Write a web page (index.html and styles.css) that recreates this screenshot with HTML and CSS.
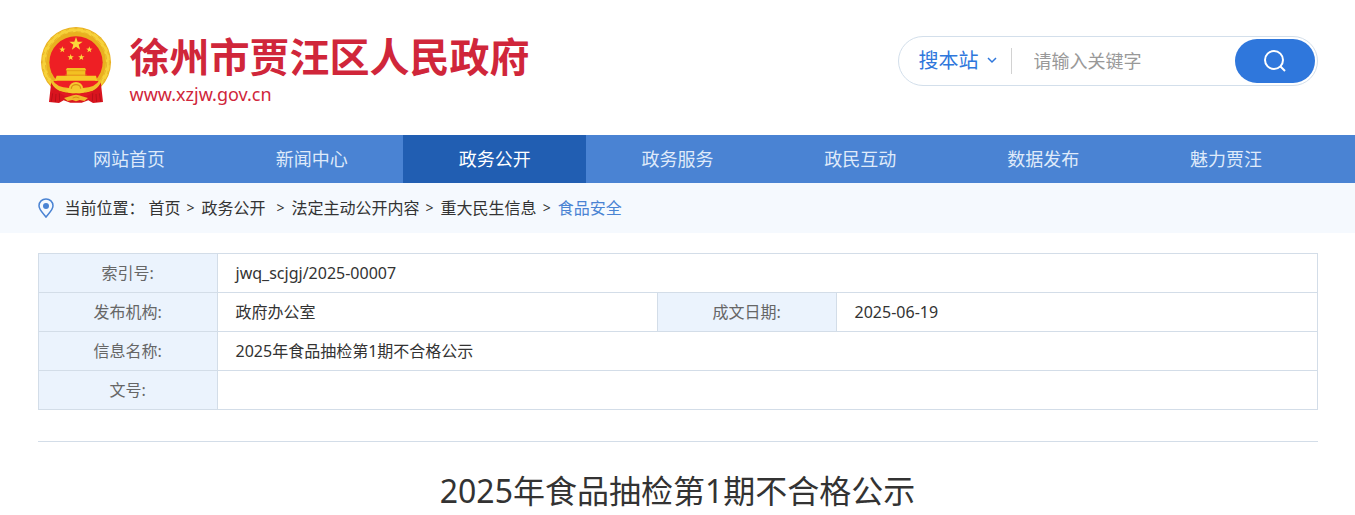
FILE: index.html
```html
<!DOCTYPE html>
<html lang="zh-CN">
<head>
  <meta charset="UTF-8">
  <meta name="viewport" content="width=device-width, initial-scale=1.0">
  <title>2025年食品抽检第1期不合格公示</title>
  <link rel="stylesheet" href="styles.css">
</head>
<body>
  <header class="header container">
    <a class="logo" href="#">
      <svg class="emblem" viewBox="24 15 228 240" aria-hidden="true">
        <defs>
          <path id="star" d="M0-10 2.4-3.2 9.5-3.1 3.8 1.2 5.9 8.1 0 4-5.9 8.1-3.8 1.2-9.5-3.1-2.4-3.2Z"/>
        </defs>
        <!-- wheat ring -->
        <ellipse cx="138" cy="127" rx="105" ry="106" fill="#e9b01f"/>
        <ellipse cx="138" cy="127" rx="96" ry="97" fill="none" stroke="#f7d23a" stroke-width="12"/>
        <ellipse cx="138" cy="127" rx="92" ry="92" fill="none" stroke="#dfa822" stroke-width="2" stroke-dasharray="16 8"/>
        <ellipse cx="138" cy="127" rx="100" ry="101" fill="none" stroke="#dfa822" stroke-width="2" stroke-dasharray="9 17"/>
        <ellipse cx="138" cy="127" rx="80" ry="78" fill="#ee1f24"/>
        <!-- stars -->
        <g fill="#fbd83a">
          <use href="#star" transform="translate(138 72) scale(2.1)"/>
          <use href="#star" transform="translate(97 89)"/>
          <use href="#star" transform="translate(178 89)"/>
          <use href="#star" transform="translate(122 112)"/>
          <use href="#star" transform="translate(154 112)"/>
        </g>
        <!-- gate tower -->
        <path d="M111 144h54l4 7h-3v16h-56v-16h-3z" fill="#f3c022"/>
        <path d="M80 167h118l4 15H74z" fill="#f6c927"/>
        <path d="M109 152h58M105 165h66" stroke="#dc9313" stroke-width="2"/>
        <!-- ribbons -->
        <path d="M64 184h148l7 62-30 3-14-8-20 7h-34l-20-7-14 8-30-3z" fill="#d9141e"/>
        <path d="M68 183h140v12l-30 15H98l-30-15z" fill="#ee1f24"/>
        <path d="M68 220l-4 25M78 222l-2 24M88 220l1 24M208 220l4 25M198 222l2 24M188 220l-1 24" stroke="#a90e17" stroke-width="2"/>
        <!-- lower wheat and gear -->
        <path d="M60 180l8 0q10 22 50 24v14q-44 0-58-38zM216 180h-8q-10 22-50 24v14q44 0 58-38z" fill="#f2c02a"/>
        <path d="M117 205a21 19 0 0 1 42 0l10 5-9 8q-22 7-44 0l-9-8z" fill="#f6c92f"/>
        <path d="M124 206a14 12 0 0 1 28 0" fill="none" stroke="#d98f16" stroke-width="4"/>
        <path d="M86 212q24 11 52 8 28 3 52-8-14 22-52 20-38 2-52-20z" fill="#e31a22"/>
        <path d="M102 234l18-5q18-10 36 0l18 5-11 9-14-3-11 4-11-4-14 3z" fill="#f1b92a"/>
        <path d="M128 234q10-6 20 0" fill="none" stroke="#d98f16" stroke-width="3"/>
      </svg>
      <span class="logo-text">
        <strong class="site-name">徐州市贾汪区人民政府</strong>
        <span class="site-url">www.xzjw.gov.cn</span>
      </span>
    </a>

    <form class="search" role="search">
      <label class="search-scope">
        <select class="scope-select" aria-label="搜索范围">
          <option>搜本站</option>
        </select>
        <svg class="chevron" viewBox="0 0 10 10" aria-hidden="true"><path d="M1 2l4 4 4-4"/></svg>
      </label>
      <input class="search-input" type="text" placeholder="请输入关键字" aria-label="请输入关键字">
      <button class="search-btn" type="button" aria-label="搜索">
        <svg viewBox="0 0 24 24" aria-hidden="true"><circle cx="11" cy="11" r="9"/><path d="M17 17l5 5"/></svg>
      </button>
    </form>
  </header>

  <nav class="nav">
    <ul class="nav-list container">
      <li><a href="#">网站首页</a></li>
      <li><a href="#">新闻中心</a></li>
      <li><a class="active" href="#">政务公开</a></li>
      <li><a href="#">政务服务</a></li>
      <li><a href="#">政民互动</a></li>
      <li><a href="#">数据发布</a></li>
      <li><a href="#">魅力贾汪</a></li>
    </ul>
  </nav>

  <div class="position">
    <div class="crumbs container">
      <svg class="pin" viewBox="0 0 16 20" aria-hidden="true">
        <path d="M8 19C6 16 1 12 1 7.700a7 6.800 0 0 1 14 0C15 12 10 16 8 19z"/>
        <circle cx="8" cy="8" r="3"/>
      </svg>
      <span class="crumbs-label">当前位置：</span>
      <a href="#">首页</a>
      <span class="sep">&gt;</span>
      <a href="#">政务公开</a>
      <span class="sep sep-wide">&gt;</span>
      <a href="#">法定主动公开内容</a>
      <span class="sep">&gt;</span>
      <a href="#">重大民生信息</a>
      <span class="sep">&gt;</span>
      <a class="current" href="#">食品安全</a>
    </div>
  </div>

  <main class="container">
    <table class="info">
      <colgroup>
        <col class="col-label">
        <col class="col-value">
        <col class="col-label">
        <col>
      </colgroup>
      <tr>
        <th scope="row">索引号:</th>
        <td colspan="3">jwq_scjgj/2025-00007</td>
      </tr>
      <tr>
        <th scope="row">发布机构:</th>
        <td>政府办公室</td>
        <th scope="row">成文日期:</th>
        <td>2025-06-19</td>
      </tr>
      <tr>
        <th scope="row">信息名称:</th>
        <td colspan="3">2025年食品抽检第1期不合格公示</td>
      </tr>
      <tr>
        <th scope="row">文号:</th>
        <td colspan="3"></td>
      </tr>
    </table>

    <h1 class="title">2025年食品抽检第1期不合格公示</h1>
  </main>
</body>
</html>
```
FILE: styles.css
```css
* {
  box-sizing: border-box;
}

body {
  margin: 0;
  font-family: "Noto Sans", "Noto Sans CJK SC", sans-serif;
  font-size: 16px;
  color: #333;
  background: #fff;
}

a {
  color: inherit;
  text-decoration: none;
}

.container {
  width: 100%;
  max-width: 1280px;
  margin: 0 auto;
}

/* header */
.header {
  display: flex;
  align-items: flex-start;
  justify-content: space-between;
  padding: 25px 0 28px;
}

.logo {
  display: flex;
  align-items: flex-start;
  gap: 16px;
  color: #d0263a;
}

.emblem {
  width: 76px;
  height: 80px;
}

.logo-text {
  display: flex;
  flex-direction: column;
  padding-top: 8px;
}

.site-name {
  font-size: 40px;
  line-height: 48px;
}

.site-url {
  font-size: 18px;
  line-height: 26px;
}

.search {
  display: flex;
  align-items: center;
  width: 420px;
  height: 50px;
  margin-top: 11px;
  padding: 0 2px 0 20px;
  border: 1px solid #d3dfeb;
  border-radius: 25px;
}

.search-scope {
  display: flex;
  align-items: center;
  gap: 8px;
  padding-right: 14px;
  border-right: 1px solid #d2d2d2;
}

.scope-select {
  appearance: none;
  padding: 0;
  border: 0;
  background: none;
  color: #2f77dc;
  font-family: inherit;
  font-size: 20px;
  line-height: 26px;
}

.chevron {
  width: 10px;
  height: 10px;
  fill: none;
  stroke: #2f77dc;
  stroke-width: 1.5;
}

.search-input {
  flex: 1;
  min-width: 0;
  padding: 0 22px;
  border: 0;
  outline: 0;
  background: none;
  font-family: inherit;
  font-size: 18px;
}

.search-input::placeholder {
  color: #999;
}

.search-btn {
  display: flex;
  align-items: center;
  justify-content: center;
  width: 80px;
  height: 44px;
  padding: 0;
  border: 0;
  border-radius: 22px;
  background: #2f77dc;
  cursor: pointer;
}

.search-btn svg {
  width: 24px;
  height: 24px;
  fill: none;
  stroke: #fff;
  stroke-width: 2;
}

/* nav */
.nav {
  background: #4a83d3;
}

.nav-list {
  display: flex;
  padding: 0;
  list-style: none;
}

.nav-list li {
  flex: 1;
}

.nav-list a {
  display: block;
  color: #dfeafa;
  font-size: 18px;
  line-height: 48px;
  text-align: center;
}

.nav-list a.active {
  background: #215eb2;
  color: #fff;
}

/* breadcrumb */
.position {
  background: #f5f9fe;
}

.crumbs {
  display: flex;
  align-items: center;
  line-height: 50px;
}

.pin {
  width: 16px;
  height: 20px;
  margin-right: 11px;
}

.pin path {
  fill: none;
  stroke: #4a83d3;
  stroke-width: 1.5;
}

.pin circle {
  fill: #4a83d3;
}

.crumbs-label {
  margin-right: 4px;
}

.sep {
  padding: 0 7px 0 6px;
  font-size: 14px;
}

.sep-wide {
  padding-left: 11px;
}

.current {
  color: #4a83d3;
}

/* document info */
.info {
  width: 100%;
  margin-top: 20px;
  border-collapse: collapse;
  table-layout: fixed;
}

.col-label {
  width: 14%;
}

.col-value {
  width: 34.4%;
}

.info th,
.info td {
  height: 39px;
  padding: 0 18px;
  border: 1px solid #d3dde8;
  line-height: 38px;
}

.info th {
  background: #ebf3fd;
  color: #666;
  font-weight: normal;
  padding: 0;
}

.title {
  margin: 31px 0 0;
  padding-top: 25px;
  border-top: 1px solid #d3dde8;
  font-size: 32px;
  font-weight: normal;
  line-height: 48px;
  text-align: center;
}
```
